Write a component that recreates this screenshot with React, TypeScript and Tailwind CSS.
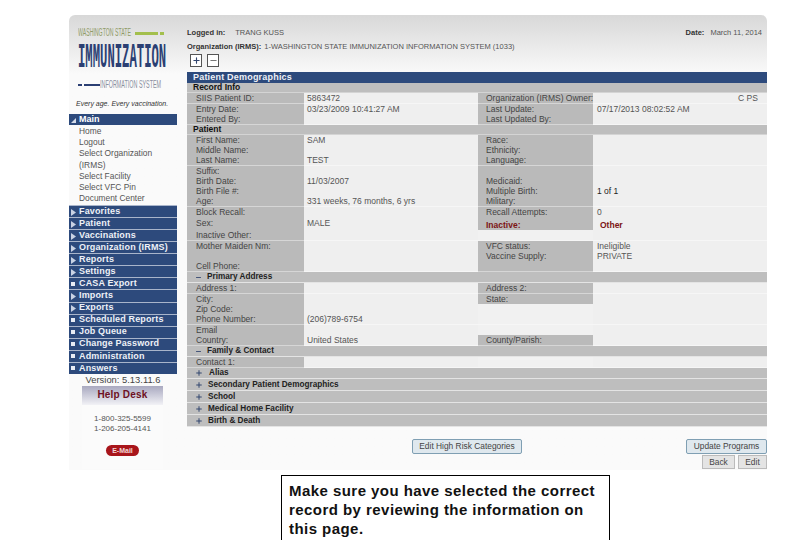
import { Minus, Plus } from "lucide-react";

type Row = {
  kind: "field" | "section" | "toggle";
  h: number;
  label?: string;
  value?: string;
  label2?: string;
  value2?: string;
  open?: boolean;
  indent?: boolean;
  inactive?: boolean;
  noLabel2?: boolean;
};

const rows: Row[] = [
  { kind: "section", h: 10, label: "Record Info" },
  { kind: "field", h: 11, label: "SIIS Patient ID:", value: "5863472", label2: "Organization (IRMS) Owner:", value2: "C PS" },
  { kind: "field", h: 10, label: "Entry Date:", value: "03/23/2009 10:41:27 AM", label2: "Last Update:", value2: "07/17/2013 08:02:52 AM" },
  { kind: "field", h: 11, label: "Entered By:", label2: "Last Updated By:" },
  { kind: "section", h: 10, label: "Patient" },
  { kind: "field", h: 10, label: "First Name:", value: "SAM", label2: "Race:" },
  { kind: "field", h: 10, label: "Middle Name:", label2: "Ethnicity:" },
  { kind: "field", h: 11, label: "Last Name:", value: "TEST", label2: "Language:" },
  { kind: "field", h: 10, label: "Suffix:", label2: " " },
  { kind: "field", h: 10, label: "Birth Date:", value: "11/03/2007", label2: "Medicaid:" },
  { kind: "field", h: 10, label: "Birth File #:", label2: "Multiple Birth:", value2: "1 of 1" },
  { kind: "field", h: 11, label: "Age:", value: "331 weeks, 76 months, 6 yrs", label2: "Military:" },
  { kind: "field", h: 10, label: "Block Recall:", label2: "Recall Attempts:", value2: "0" },
  { kind: "field", h: 13, label: "Sex:", value: "MALE", label2: "Inactive:", value2: "Other", inactive: true },
  { kind: "field", h: 11, label: "Inactive Other:", noLabel2: true },
  { kind: "field", h: 10, label: "Mother Maiden Nm:", label2: "VFC status:", value2: "Ineligible" },
  { kind: "field", h: 10, label: " ", label2: "Vaccine Supply:", value2: "PRIVATE" },
  { kind: "field", h: 11, label: "Cell Phone:", label2: " " },
  { kind: "toggle", h: 11, label: "Primary Address", open: true },
  { kind: "field", h: 11, label: "Address 1:", label2: "Address 2:" },
  { kind: "field", h: 10, label: "City:", label2: "State:" },
  { kind: "field", h: 10, label: "Zip Code:", noLabel2: true },
  { kind: "field", h: 11, label: "Phone Number:", value: "(206)789-6754", noLabel2: true },
  { kind: "field", h: 10, label: "Email", noLabel2: true },
  { kind: "field", h: 11, label: "Country:", value: "United States", label2: "County/Parish:" },
  { kind: "toggle", h: 11, label: "Family & Contact", open: true },
  { kind: "field", h: 11, label: "Contact 1:", noLabel2: true },
  { kind: "toggle", h: 11, label: "Alias", indent: true },
  { kind: "toggle", h: 12, label: "Secondary Patient Demographics" },
  { kind: "toggle", h: 12, label: "School" },
  { kind: "toggle", h: 12, label: "Medical Home Facility" },
  { kind: "toggle", h: 12, label: "Birth & Death" },
];

const menu: { name: string; leaf?: boolean }[] = [
  { name: "Favorites" },
  { name: "Patient" },
  { name: "Vaccinations" },
  { name: "Organization (IRMS)" },
  { name: "Reports" },
  { name: "Settings" },
  { name: "CASA Export", leaf: true },
  { name: "Imports" },
  { name: "Exports" },
  { name: "Scheduled Reports", leaf: true },
  { name: "Job Queue", leaf: true },
  { name: "Change Password", leaf: true },
  { name: "Administration", leaf: true },
  { name: "Answers", leaf: true },
];

const subLinks = ["Home", "Logout", "Select Organization", "(IRMS)", "Select Facility", "Select VFC Pin", "Document Center"];

function Logo() {
  return (
    <div className="h-[99px] pl-[9px] pt-[13px] overflow-hidden">
      <div className="flex items-center h-[10px]">
        <span className="text-[10px] leading-[10px] text-[#8f9a66] whitespace-nowrap scale-x-[0.52] origin-left w-[57px] shrink-0">WASHINGTON STATE</span>
        <span className="w-[23px] h-[3px] bg-[#a3bf4d] shrink-0" />
        <span className="w-[4px] h-[3px] bg-[#a3bf4d] ml-[2px] shrink-0" />
      </div>
      <div className="h-[27px] mt-[7px] font-['Liberation_Mono'] font-bold text-[#2b3f73] text-[35px] leading-[27px] whitespace-nowrap scale-x-[0.35] origin-left">IMMUNIZATION</div>
      <div className="flex items-center h-[10px] mt-[8px]">
        <span className="w-[4px] h-[2px] bg-[#2b3f73] shrink-0" />
        <span className="w-[16px] h-[2px] bg-[#2b3f73] ml-[2px] shrink-0" />
        <span className="text-[10px] leading-[10px] text-[#8a8f9e] whitespace-nowrap scale-x-[0.54] origin-left w-[65px] shrink-0">INFORMATION SYSTEM</span>
      </div>
      <div className="mt-[9px] -ml-[2px] text-[7px] leading-[9px] italic text-[#333] whitespace-nowrap">Every age. Every vaccination.</div>
    </div>
  );
}

function Arrow({ leaf }: { leaf?: boolean }) {
  if (leaf) return <span className="w-[4px] h-[4px] bg-[#e8ecf4] ml-[2px] mr-[4px] shrink-0" />;
  return (
    <svg width="5" height="7" viewBox="0 0 5 7" className="ml-[2px] mr-[3px] mt-[1px] shrink-0">
      <polygon points="0,0 5,3.5 0,7" fill="#c9d2e3" />
    </svg>
  );
}

function Sidebar() {
  return (
    <aside className="w-[108px] shrink-0">
      <Logo />
      <div className="h-[11px] bg-[#2d4a7c] flex items-center text-white font-bold text-[9px]">
        <svg width="5" height="5" viewBox="0 0 5 5" className="ml-[2px] mr-[3px] mt-[2px] shrink-0">
          <polygon points="5,0 5,5 0,5" fill="#d5dbe8" />
        </svg>
        Main
      </div>
      <div className="pl-[10px] pt-[1px] h-[80px] text-[8.4px] text-[#555]">
        {subLinks.map((link, i) => (
          <div key={i} className="h-[11.2px] leading-[11px] whitespace-nowrap">{link}</div>
        ))}
      </div>
      <div>
        {menu.map((item) => (
          <div key={item.name} className="h-[12.07px] bg-[#2d4a7c] border-t border-[#a9b5cb] flex items-center text-[#eef1f7] font-bold text-[9px] tracking-[0.15px] whitespace-nowrap">
            <Arrow leaf={item.leaf} />
            {item.name}
          </div>
        ))}
      </div>
      <div className="text-center text-[9.4px] leading-[12px] text-[#444]">Version: 5.13.11.6</div>
      <div className="ml-[13px] w-[81px] h-[83px] bg-[#fbfbfb]">
        <div className="h-[19px] bg-linear-to-b from-[#a9a9c0] to-[#f2f2f6] text-center text-[#6e1023] font-bold text-[10px] tracking-[0.2px] leading-[17px]">Help Desk</div>
        <div className="mt-[9px] text-center text-[8px] leading-[10px] text-[#555]">
          <div>1-800-325-5599</div>
          <div>1-206-205-4141</div>
        </div>
        <div className="mx-auto mt-[11px] w-[33px] h-[11px] rounded-full bg-[#a8151b] text-center text-[#f3d6d6] font-bold text-[7px] leading-[11px]">E-Mail</div>
      </div>
    </aside>
  );
}

function Toggle({ open }: { open?: boolean }) {
  return open
    ? <Minus size={7} strokeWidth={3} className="text-[#33466f] ml-[8px] mr-[5px] shrink-0" />
    : <Plus size={8} strokeWidth={3} className="text-[#33466f] ml-[8px] mr-[5px] shrink-0" />;
}

function RecordRow({ row }: { row: Row }) {
  if (row.kind === "section") {
    return (
      <div style={{ height: row.h }} className="bg-[#bebebe] pl-[6px] flex items-center font-bold text-[8.5px] text-[#111] border-b border-[#d4d4d4]">
        {row.label}
      </div>
    );
  }
  if (row.kind === "toggle") {
    return (
      <div style={{ height: row.h }} className="bg-[#bebebe] flex items-center font-bold text-[8.2px] text-[#222] border-b border-[#e4e4e4]">
        <Toggle open={row.open} />
        <span className={`pt-[1px] ${row.indent ? "ml-[1px]" : ""}`}>{row.label}</span>
      </div>
    );
  }
  const lowered = row.value === "MALE";
  return (
    <div style={{ height: row.h }} className="grid grid-cols-[117px_174px_115px_174px] text-[8.5px] text-[#555] leading-[10px]">
      <div className={`bg-[#bababa] pl-[9px] border-b border-[#d6d6d6] whitespace-nowrap text-[#444] ${lowered ? "pt-[1px]" : ""}`}>{row.label}</div>
      <div className={`bg-[#efefef] pl-[3px] border-b border-[#f6f6f6] whitespace-nowrap ${lowered ? "pt-[1px]" : ""}`}>{row.value}</div>
      {row.noLabel2 ? (
        <div className="bg-[#f1f1f1] border-b border-[#f6f6f6]" />
      ) : (
        <div className={`bg-[#bababa] pl-[8px] border-b border-[#d6d6d6] whitespace-nowrap ${row.inactive ? "font-bold text-[#7c1414] pt-[3px]" : "text-[#444]"}`}>{row.label2}</div>
      )}
      <div className={`bg-[#efefef] pl-[4px] border-b border-[#f6f6f6] whitespace-nowrap ${row.inactive ? "font-bold text-[#7c1414] pl-[7px] pt-[3px]" : ""} ${row.value2 === "C PS" ? "pl-[145px]" : ""} ${row.value2 === "1 of 1" ? "text-[#222]" : ""}`}>
        {row.value2}
      </div>
    </div>
  );
}

function Main() {
  return (
    <main className="ml-[10px] w-[580px] flex flex-col">
      <div className="h-[57px] pt-[13px] text-[7.5px] text-[#555]">
        <div className="flex justify-between h-[13px] leading-[10px]">
          <div><span className="font-bold text-[#333] mr-[8px]">Logged in:</span> TRANG KUSS</div>
          <div className="pr-[5px]"><span className="font-bold text-[#333] mr-[4px]">Date:</span> March 11, 2014</div>
        </div>
        <div className="h-[12px] leading-[12px] whitespace-nowrap">
          <span className="font-bold text-[#333] mr-[1px]">Organization (IRMS):</span> 1-WASHINGTON STATE IMMUNIZATION INFORMATION SYSTEM (1033)
        </div>
        <div className="flex gap-[5px] pl-[3px] mt-[1px]">
          <span className="w-[12px] h-[13px] border border-[#555] bg-white flex items-center justify-center"><Plus size={9} strokeWidth={3} className="text-[#33466f]" /></span>
          <span className="w-[12px] h-[13px] border border-[#555] bg-white flex items-center justify-center"><Minus size={9} strokeWidth={3} className="text-[#777]" /></span>
        </div>
      </div>
      <div className="h-[11px] bg-[#2d4a7c] pl-[6px] flex items-center text-[#eef1f7] font-bold text-[9px] tracking-[0.2px]">Patient Demographics</div>
      <div>
        {rows.map((row, i) => <RecordRow key={i} row={row} />)}
      </div>
      <div className="relative h-[43px] text-[8.4px] text-[#444]">
        <div className="flex justify-between items-start pt-[12px]">
          <button className="ml-[225px] w-[110px] h-[15px] border border-[#7f9fb3] rounded-[2px] bg-[#dfe8ee]">Edit High Risk Categories</button>
          <button className="w-[81px] h-[15px] border border-[#7f9fb3] rounded-[2px] bg-[#dfe8ee]">Update Programs</button>
        </div>
        <div className="flex justify-end gap-[3px] mt-[1px]">
          <button className="w-[33px] h-[14px] border border-[#bbb] bg-[#e4e4e4]">Back</button>
          <button className="w-[29px] h-[14px] border border-[#bbb] bg-[#e4e4e4]">Edit</button>
        </div>
      </div>
    </main>
  );
}

export default function App() {
  return (
    <div className="w-[810px] h-[540px] bg-white overflow-hidden font-['Liberation_Sans',Arial,sans-serif] pl-[69px] pt-[15px]">
      <div className="w-[698px] h-[455px] flex rounded-t-[6px] overflow-hidden bg-linear-to-b from-[#d8d8d8] to-[#fafafa] to-[13%]">
        <Sidebar />
        <Main />
      </div>
      <div className="ml-[212px] mt-[5px] w-[329px] h-[80px] border border-black px-[7px] pt-[5px] text-[15px] leading-[19px] font-bold text-[#111] tracking-[0.45px]">
        Make sure you have selected the correct record by reviewing the information on this page.
      </div>
    </div>
  );
}
